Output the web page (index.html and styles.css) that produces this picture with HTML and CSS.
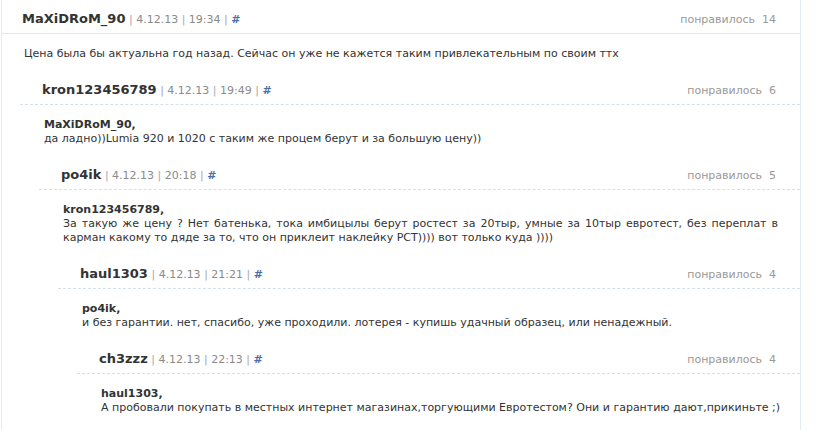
FILE: index.html
```html
<!DOCTYPE html>
<html lang="ru">
<head>
<meta charset="utf-8">
<title>Комментарии</title>
<link rel="stylesheet" href="styles.css">
</head>
<body>
<div class="thread">
  <div class="comment top">
    <div class="c-head">
      <div class="c-meta"><span class="author">MaXiDRoM_90</span> <span class="sep">|</span> 4.12.13 <span class="sep">|</span> 19:34 <span class="sep">|</span> <a class="anchor" href="#">#</a></div>
      <div class="likes">понравилось&nbsp; 14</div>
    </div>
    <div class="c-body">Цена была бы актуальна год назад. Сейчас он уже не кажется таким привлекательным по своим ттх</div>

    <div class="replies">
      <div class="comment">
        <div class="c-head">
          <div class="c-meta"><span class="author">kron123456789</span> <span class="sep">|</span> 4.12.13 <span class="sep">|</span> 19:49 <span class="sep">|</span> <a class="anchor" href="#">#</a></div>
          <div class="likes">понравилось&nbsp; 6</div>
        </div>
        <div class="c-body"><div class="to">MaXiDRoM_90,</div>да ладно))Lumia 920 и 1020 с таким же процем берут и за большую цену))</div>

        <div class="replies">
          <div class="comment">
            <div class="c-head">
              <div class="c-meta"><span class="author">po4ik</span> <span class="sep">|</span> 4.12.13 <span class="sep">|</span> 20:18 <span class="sep">|</span> <a class="anchor" href="#">#</a></div>
              <div class="likes">понравилось&nbsp; 5</div>
            </div>
            <div class="c-body justify"><div class="to">kron123456789,</div>За такую же цену ? Нет батенька, тока имбицылы берут ростест за 20тыр, умные за 10тыр евротест, без переплат в карман какому то дяде за то, что он приклеит наклейку РСТ)))) вот только куда ))))</div>

            <div class="replies">
              <div class="comment">
                <div class="c-head">
                  <div class="c-meta"><span class="author">haul1303</span> <span class="sep">|</span> 4.12.13 <span class="sep">|</span> 21:21 <span class="sep">|</span> <a class="anchor" href="#">#</a></div>
                  <div class="likes">понравилось&nbsp; 4</div>
                </div>
                <div class="c-body"><div class="to">po4ik,</div>и без гарантии. нет, спасибо, уже проходили. лотерея - купишь удачный образец, или ненадежный.</div>

                <div class="replies">
                  <div class="comment">
                    <div class="c-head">
                      <div class="c-meta"><span class="author">ch3zzz</span> <span class="sep">|</span> 4.12.13 <span class="sep">|</span> 22:13 <span class="sep">|</span> <a class="anchor" href="#">#</a></div>
                      <div class="likes">понравилось&nbsp; 4</div>
                    </div>
                    <div class="c-body"><div class="to">haul1303,</div>А пробовали покупать в местных интернет магазинах,торгующими Евротестом? Они и гарантию дают,прикиньте ;)</div>
                  </div>
                </div>
              </div>
            </div>
          </div>
        </div>
      </div>
    </div>
  </div>
</div>
</body>
</html>
```

FILE: styles.css
```css
html, body {
  margin: 0;
  padding: 0;
  background: #ffffff;
}

body {
  font-family: "DejaVu Sans", Verdana, sans-serif;
  font-size: 11px;
  color: #333333;
}

.thread {
  margin-left: 1px;
  width: 798px;
  min-height: 430px;
  border-left: 1px solid #e1eef2;
  border-right: 1px solid #e1eef2;
}

.c-head {
  display: flex;
  justify-content: space-between;
  align-items: baseline;
  padding: 12px 24px 6px 22px;
  line-height: 14px;
  border-bottom: 1px dashed #d5e0e8;
  color: #8a8a8a;
}

.comment.top > .c-head {
  padding-left: 20px;
  border-bottom: 1px solid #dce9ee;
}

.author {
  font-size: 13px;
  font-weight: bold;
  color: #333333;
}

.sep {
  color: #a8a8a8;
}

.anchor {
  color: #4a6ea9;
  font-weight: bold;
  text-decoration: none;
}

.likes {
  color: #999999;
}

.c-body {
  padding: 13px 12px 10px 24px;
  line-height: 14px;
  color: #333333;
}

.comment.top > .c-body {
  padding-left: 22px;
}

.c-body.justify {
  text-align: justify;
  padding-right: 22px;
}

.to {
  font-weight: bold;
}

.replies {
  margin-left: 19px;
}

.comment.top > .replies {
  margin-left: 18px;
}
```
